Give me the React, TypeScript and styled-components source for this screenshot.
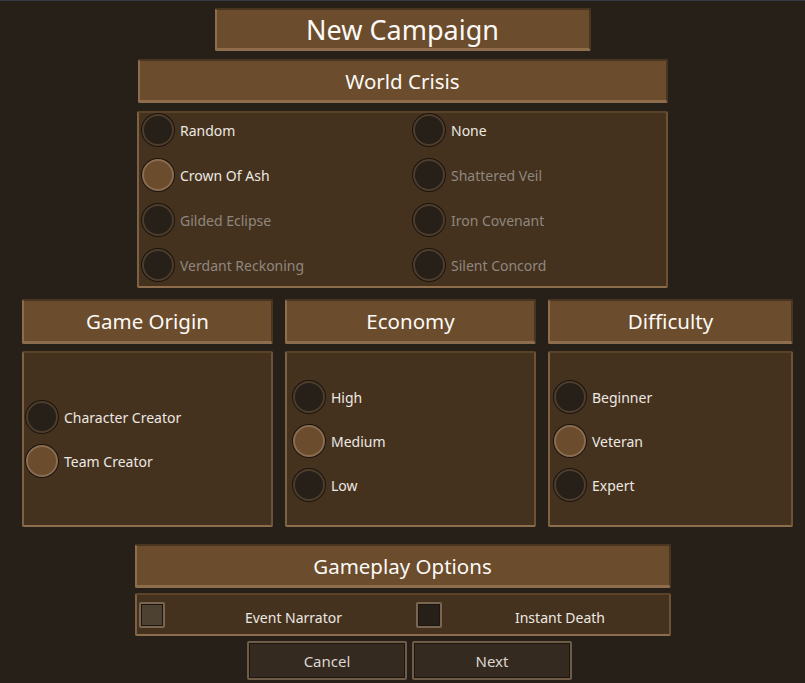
import React from 'react';
import styled, { createGlobalStyle } from 'styled-components';

const GlobalStyle = createGlobalStyle`
  html, body {
    margin: 0;
    padding: 0;
    background: #262019;
  }
  body {
    font-family: "Noto Sans", "Open Sans", sans-serif;
    color: #ece8e2;
  }
`;

const Screen = styled.div`
  width: 805px;
  height: 683px;
  box-sizing: border-box;
  border-top: 1px solid #3a3a44;
  background: #262019;
  display: flex;
  flex-direction: column;
  align-items: center;
  overflow: hidden;
`;

// raised brown plate used for every title bar
const Plate = styled.div<{ $w: number; $h: number; $size: number }>`
  box-sizing: border-box;
  width: ${p => p.$w}px;
  height: ${p => p.$h}px;
  background: #6b4c2c;
  border-top: 2px solid #4a3520;
  border-right: 2px solid #4a3520;
  border-left: 2px solid #8d6d4c;
  border-bottom: 3px solid #8d6d4c;
  border-radius: 2px;
  display: flex;
  align-items: center;
  justify-content: center;
  font-size: ${p => p.$size}px;
  color: #fbf9f6;
`;

// sunken panel holding the options
const Panel = styled.div<{ $w: number; $h: number }>`
  box-sizing: border-box;
  width: ${p => p.$w}px;
  height: ${p => p.$h}px;
  background: #45321e;
  border-top: 2px solid #5b4329;
  border-right: 2px solid #6e5234;
  border-left: 2px solid #7e6042;
  border-bottom: 2px solid #8d6d4c;
  border-radius: 2px;
`;

const CrisisGrid = styled(Panel)`
  display: grid;
  grid-template-columns: 271px 1fr;
  row-gap: 13px;
  align-content: start;
  padding: 1px 0 0 3px;
`;

const ColumnsRow = styled.div`
  display: flex;
  gap: 12px;
  margin-top: 11px;
  align-self: flex-start;
  margin-left: 22px;
`;

const Column = styled.div`
  display: flex;
  flex-direction: column;
  gap: 7px;
`;

const ChoiceStack = styled(Panel)<{ $pad: number; $shift: number }>`
  display: flex;
  flex-direction: column;
  justify-content: center;
  gap: 12px;
  padding-left: ${p => p.$pad}px;
  padding-top: ${p => p.$shift}px;
`;

const Choice = styled.label`
  display: flex;
  align-items: center;
  gap: 6px;
  height: 32px;
`;

const Dot = styled.span<{ $on?: boolean }>`
  box-sizing: border-box;
  width: 32px;
  height: 32px;
  border-radius: 50%;
  background: ${p => (p.$on ? '#6b4c2c' : '#262019')};
  border: 2px solid ${p => (p.$on ? '#8a6d50' : '#4f3d2b')};
  box-shadow: 0 0 0 1px #1a140f;
  flex: none;
`;

const ChoiceText = styled.span<{ $dim?: boolean }>`
  font-size: 14px;
  color: ${p => (p.$dim ? '#8f877e' : '#ece8e2')};
`;

const OptionsBar = styled(Panel)`
  display: grid;
  grid-template-columns: 277px 1fr;
  align-items: center;
  padding-left: 2px;
`;

const Toggle = styled.div`
  display: flex;
  align-items: center;
`;

const Box = styled.span<{ $on?: boolean }>`
  box-sizing: border-box;
  width: 26px;
  height: 26px;
  background: ${p => (p.$on ? '#4d4132' : '#272019')};
  border: 2px solid #7a6550;
  box-shadow: inset 0 0 0 1px #1c1611;
  border-radius: 2px;
  flex: none;
`;

const ToggleText = styled.span<{ $nudge: number }>`
  flex: 1;
  text-align: center;
  font-size: 14px;
  padding-top: 5px;
  padding-left: ${p => p.$nudge}px;
  color: #ece8e2;
`;

const Buttons = styled.div`
  display: flex;
  gap: 5px;
  margin-top: 5px;
  margin-left: 14px;
`;

const Button = styled.button`
  box-sizing: border-box;
  width: 160px;
  height: 39px;
  background: #352a20;
  border: 2px solid #6f5b46;
  box-shadow: inset 0 0 0 1px #1d1712;
  border-radius: 2px;
  font-family: "Noto Sans", "Open Sans", sans-serif;
  font-size: 15px;
  color: #dcd7d0;
  padding: 0;
`;

type Opt = { label: string; on?: boolean; dim?: boolean };

const crisis: Opt[] = [
  { label: 'Random' },
  { label: 'None' },
  { label: 'Crown Of Ash', on: true },
  { label: 'Shattered Veil', dim: true },
  { label: 'Gilded Eclipse', dim: true },
  { label: 'Iron Covenant', dim: true },
  { label: 'Verdant Reckoning', dim: true },
  { label: 'Silent Concord', dim: true },
];

const groups: { title: string; w: number; pad: number; shift: number; opts: Opt[] }[] = [
  {
    title: 'Game Origin',
    w: 251,
    pad: 2,
    shift: 0,
    opts: [{ label: 'Character Creator' }, { label: 'Team Creator', on: true }],
  },
  {
    title: 'Economy',
    w: 251,
    pad: 6,
    shift: 4,
    opts: [{ label: 'High' }, { label: 'Medium', on: true }, { label: 'Low' }],
  },
  {
    title: 'Difficulty',
    w: 245,
    pad: 4,
    shift: 4,
    opts: [{ label: 'Beginner' }, { label: 'Veteran', on: true }, { label: 'Expert' }],
  },
];

const Radio = ({ label, on, dim }: Opt) => (
  <Choice>
    <Dot $on={on} />
    <ChoiceText $dim={dim}>{label}</ChoiceText>
  </Choice>
);

export default function App() {
  return (
    <Screen>
      <GlobalStyle />
      <Plate $w={376} $h={43} $size={27} style={{ marginTop: 7 }}>
        New Campaign
      </Plate>
      <Plate $w={530} $h={44} $size={20.5} style={{ marginTop: 8 }}>
        World Crisis
      </Plate>
      <CrisisGrid $w={531} $h={177} style={{ marginTop: 8 }}>
        {crisis.map(o => (
          <Radio key={o.label} {...o} />
        ))}
      </CrisisGrid>

      <ColumnsRow>
        {groups.map(g => (
          <Column key={g.title}>
            <Plate $w={g.w} $h={45} $size={20.5}>
              {g.title}
            </Plate>
            <ChoiceStack $w={g.w} $h={176} $pad={g.pad} $shift={g.shift}>
              {g.opts.map(o => (
                <Radio key={o.label} {...o} />
              ))}
            </ChoiceStack>
          </Column>
        ))}
      </ColumnsRow>

      <Plate $w={536} $h={44} $size={20.5} style={{ marginTop: 17 }}>
        Gameplay Options
      </Plate>
      <OptionsBar $w={536} $h={43} style={{ marginTop: 5 }}>
        <Toggle>
          <Box $on />
          <ToggleText $nudge={7}>Event Narrator</ToggleText>
        </Toggle>
        <Toggle>
          <Box />
          <ToggleText $nudge={10}>Instant Death</ToggleText>
        </Toggle>
      </OptionsBar>

      <Buttons>
        <Button>Cancel</Button>
        <Button>Next</Button>
      </Buttons>
    </Screen>
  );
}
